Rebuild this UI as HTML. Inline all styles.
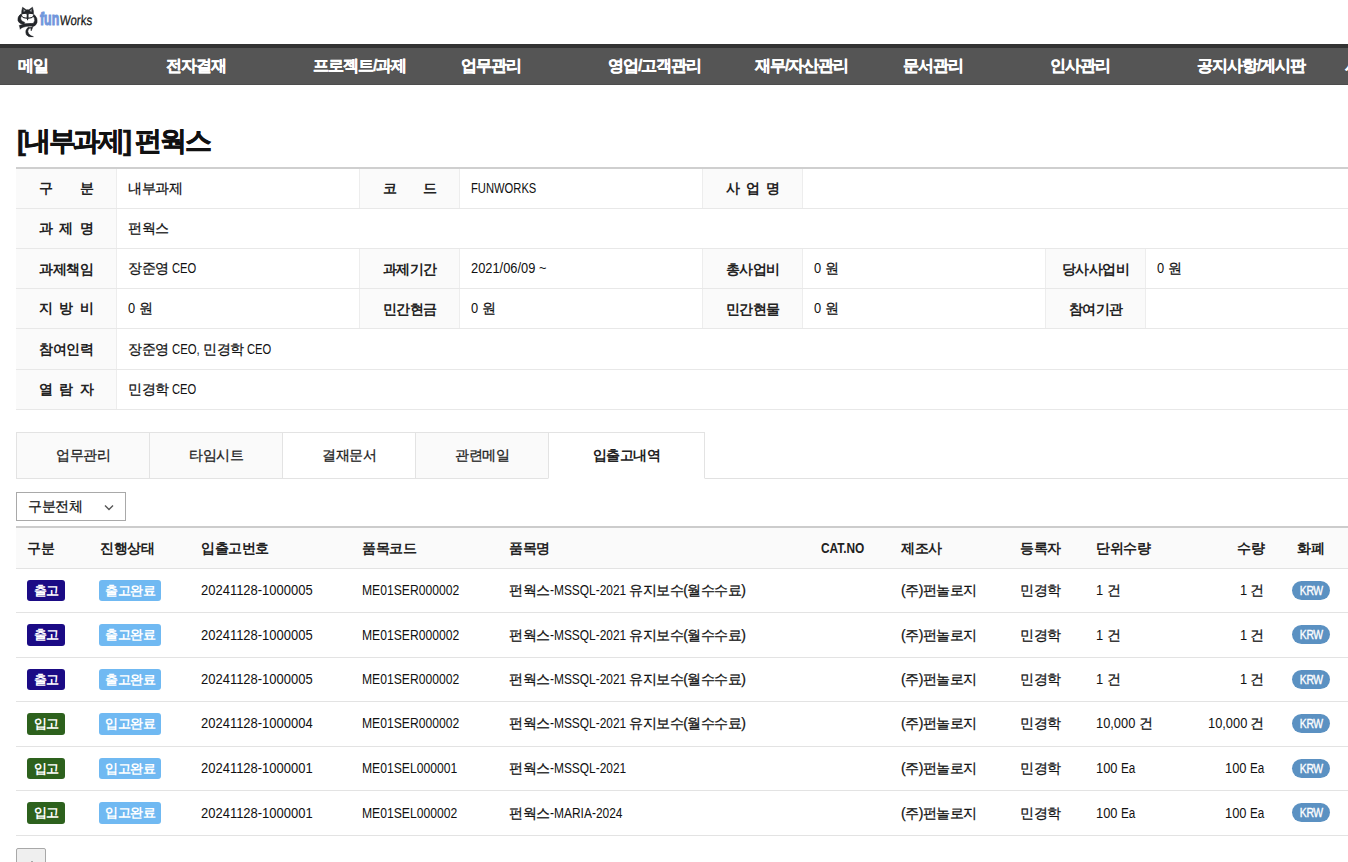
<!DOCTYPE html>
<html lang="ko">
<head>
<meta charset="utf-8">
<style>
*{box-sizing:border-box;margin:0;padding:0}
html,body{width:1348px;height:862px;overflow:hidden;background:#fff}
body{font-family:"Liberation Sans",sans-serif;color:#222;font-size:14px;position:relative;letter-spacing:-0.5px}
.a{position:absolute;white-space:nowrap}
.sx{display:inline-block;white-space:nowrap;letter-spacing:0;-webkit-text-stroke:0}.sx>span{display:inline-block;transform-origin:0 50%}
.tx{-webkit-text-stroke:0.25px #111;color:#111}
#nav{left:0;top:44px;width:1348px;height:41px;background:#555;border-top:4px solid #333;border-bottom:1px solid #4c4c4c}
#nav span{position:absolute;top:8px;color:#fff;font-weight:bold;font-size:16px;white-space:nowrap;letter-spacing:-1px;-webkit-text-stroke:0.3px #fff}
#title{left:17px;top:123px;font-size:27px;font-weight:bold;letter-spacing:-2.2px;-webkit-text-stroke:0.5px #111;color:#111}
.hl{position:absolute;height:1px;background:#e8e8e8}
.vl{position:absolute;width:1px;background:#ededed}
.lab{position:absolute;background:#fafafa;font-weight:bold}
.lab .in{position:absolute;display:flex;justify-content:space-between;white-space:nowrap}
.val{position:absolute;white-space:nowrap}
.tab{position:absolute;top:432px;height:47px;border:1px solid #e3e3e3;background:#fafafa;text-align:center;line-height:44px;font-size:14px;-webkit-text-stroke:0.3px #222}
.tab.on{background:#fff;border-bottom-color:#fff;font-weight:bold;-webkit-text-stroke:0}
.th{position:absolute;top:540px;font-weight:bold}
.b{position:absolute;color:#fff;font-weight:bold;font-size:13px;border-radius:3px;height:21px;line-height:21px;text-align:center}
.out{background:#1b0b85}
.inb{background:#2d611d}
.st{background:#70b9f2}
.krw{position:absolute;color:#fff;font-size:13px;background:#5b91c2;border-radius:10px;height:19px;line-height:19px;width:38px;text-align:center;-webkit-text-stroke:0.35px #fff}.krw span{display:inline-block;transform:scaleX(0.8)}
</style>
</head>
<body>
<svg class="a" style="left:14px;top:4px" width="30" height="36" viewBox="0 0 718 862">
<g fill="#222529" stroke="#222529" stroke-width="12" stroke-linejoin="round">
<path d="M182,255 Q178,170 205,78 L295,140 Q325,130 355,140 L442,75 Q475,170 468,255 Q400,225 325,232 Q250,225 182,255 Z"/>
<path d="M165,240 Q75,300 95,400 Q120,480 240,485 L258,440 Q175,420 160,360 Q150,300 210,262 Z"/>
<path d="M480,250 Q575,330 552,440 Q530,520 440,545 L418,495 Q485,460 495,395 Q500,320 440,280 Z"/>
<path d="M125,515 Q250,455 455,465 L448,528 Q310,515 170,570 Z"/>
<path d="M135,530 L148,605 L200,552 Z"/>
<path d="M350,552 Q250,625 295,735 Q345,805 465,782 Q345,748 332,660 Q328,600 400,570 Z"/>
<path d="M398,548 L410,645 L450,555 Z"/>
</g>
<g fill="#222529">
<path d="M180,278 Q250,340 318,318 L328,352 Q235,362 175,300 Z"/>
<path d="M470,278 Q400,340 332,318 L322,352 Q415,362 475,300 Z"/>
<path d="M292,225 L358,225 L336,390 L314,390 Z"/>
</g>
<g fill="#fff">
<path d="M182,258 Q240,222 308,252 Q304,308 258,314 Q208,308 182,258 Z"/>
<path d="M468,258 Q410,222 342,252 Q346,308 392,314 Q442,308 468,258 Z"/>
</g>
<path fill="#222529" d="M306,232 L344,232 L330,320 L320,320 Z"/>
<path fill="#a0a3a8" d="M225,118 L232,190 L278,160 Z M425,114 L418,190 L372,160 Z"/>
<path fill="#c8cacd" d="M235,265 Q252,256 270,268 Q252,288 235,265 Z M380,268 Q398,256 415,265 Q398,288 380,268 Z"/>
</svg>

<svg class="a" style="left:38px;top:6px" width="58" height="24" viewBox="0 0 58 24">
<text x="2" y="19" font-family="Liberation Sans" font-weight="bold" font-size="19" fill="#7196dc" stroke="#7196dc" stroke-width="1.1" textLength="19.2" lengthAdjust="spacingAndGlyphs" letter-spacing="0">fun</text>
<text x="21.6" y="19" font-family="Liberation Sans" font-size="14" fill="#1c1c1c" stroke="#1c1c1c" stroke-width="0.25" textLength="32.3" lengthAdjust="spacingAndGlyphs" letter-spacing="0" transform="skewX(-4)" style="transform-origin:22px 19px">Works</text>
</svg>

<div id="nav" class="a"><span style="left:18px">메일</span><span style="left:166px">전자결재</span><span style="left:313px">프로젝트/과제</span><span style="left:461px">업무관리</span><span style="left:608px">영업/고객관리</span><span style="left:755px">재무/자산관리</span><span style="left:903px">문서관리</span><span style="left:1050px">인사관리</span><span style="left:1197px">공지사항/게시판</span><span style="left:1345px">시스템</span></div>
<div id="title" class="a">[내부과제] 펀웍스</div>
<div class="a" style="left:16px;top:167px;width:1332px;height:2px;background:#cfcfcf"></div>
<div class="lab" style="left:16px;top:169px;width:100px;height:39px"><div class="in" style="left:23.0px;width:54px;top:11px"><span>구</span><span>분</span></div></div>
<div class="vl" style="left:116px;top:169px;height:39px"></div>
<div class="val tx" style="left:128px;top:169px;line-height:39px">내부과제</div>
<div class="lab" style="left:360px;top:169px;width:99px;height:39px"><div class="in" style="left:22.5px;width:54px;top:11px"><span>코</span><span>드</span></div></div>
<div class="vl" style="left:359px;top:169px;height:39px"></div>
<div class="vl" style="left:459px;top:169px;height:39px"></div>
<div class="val tx" style="left:471px;top:169px;line-height:39px"><span class="sx" style="width:65.33px"><span style="transform:scaleX(0.8000)">FUNWORKS</span></span></div>
<div class="lab" style="left:703px;top:169px;width:99px;height:39px"><div class="in" style="left:22.5px;width:54px;top:11px"><span>사</span><span>업</span><span>명</span></div></div>
<div class="vl" style="left:702px;top:169px;height:39px"></div>
<div class="vl" style="left:802px;top:169px;height:39px"></div>
<div class="hl" style="left:16px;top:208px;width:1332px"></div>
<div class="lab" style="left:16px;top:209px;width:100px;height:39px"><div class="in" style="left:23.0px;width:54px;top:11px"><span>과</span><span>제</span><span>명</span></div></div>
<div class="vl" style="left:116px;top:209px;height:39px"></div>
<div class="val tx" style="left:128px;top:209px;line-height:39px">펀웍스</div>
<div class="hl" style="left:16px;top:248px;width:1332px"></div>
<div class="lab" style="left:16px;top:249px;width:100px;height:39px;text-align:center;line-height:40px">과제책임</div>
<div class="vl" style="left:116px;top:249px;height:39px"></div>
<div class="val tx" style="left:128px;top:249px;line-height:39px">장준영 <span class="sx" style="width:24.27px"><span style="transform:scaleX(0.8000)">CEO</span></span></div>
<div class="lab" style="left:360px;top:249px;width:99px;height:39px;text-align:center;line-height:40px">과제기간</div>
<div class="vl" style="left:359px;top:249px;height:39px"></div>
<div class="vl" style="left:459px;top:249px;height:39px"></div>
<div class="val tx" style="left:471px;top:249px;line-height:39px"><span class="sx" style="width:64.31px"><span style="transform:scaleX(0.9178)">2021/06/09</span></span> <span class="sx" style="width:7.36px"><span style="transform:scaleX(0.9000)">~</span></span></div>
<div class="lab" style="left:703px;top:249px;width:99px;height:39px;text-align:center;line-height:40px">총사업비</div>
<div class="vl" style="left:702px;top:249px;height:39px"></div>
<div class="vl" style="left:802px;top:249px;height:39px"></div>
<div class="val tx" style="left:814px;top:249px;line-height:39px"><span class="sx" style="width:7.16px"><span style="transform:scaleX(0.9200)">0</span></span> 원</div>
<div class="lab" style="left:1046px;top:249px;width:99px;height:39px;text-align:center;line-height:40px">당사사업비</div>
<div class="vl" style="left:1045px;top:249px;height:39px"></div>
<div class="vl" style="left:1145px;top:249px;height:39px"></div>
<div class="val tx" style="left:1157px;top:249px;line-height:39px"><span class="sx" style="width:7.16px"><span style="transform:scaleX(0.9200)">0</span></span> 원</div>
<div class="hl" style="left:16px;top:288px;width:1332px"></div>
<div class="lab" style="left:16px;top:289px;width:100px;height:39px"><div class="in" style="left:23.0px;width:54px;top:11px"><span>지</span><span>방</span><span>비</span></div></div>
<div class="vl" style="left:116px;top:289px;height:39px"></div>
<div class="val tx" style="left:128px;top:289px;line-height:39px"><span class="sx" style="width:7.16px"><span style="transform:scaleX(0.9200)">0</span></span> 원</div>
<div class="lab" style="left:360px;top:289px;width:99px;height:39px;text-align:center;line-height:40px">민간현금</div>
<div class="vl" style="left:359px;top:289px;height:39px"></div>
<div class="vl" style="left:459px;top:289px;height:39px"></div>
<div class="val tx" style="left:471px;top:289px;line-height:39px"><span class="sx" style="width:7.16px"><span style="transform:scaleX(0.9200)">0</span></span> 원</div>
<div class="lab" style="left:703px;top:289px;width:99px;height:39px;text-align:center;line-height:40px">민간현물</div>
<div class="vl" style="left:702px;top:289px;height:39px"></div>
<div class="vl" style="left:802px;top:289px;height:39px"></div>
<div class="val tx" style="left:814px;top:289px;line-height:39px"><span class="sx" style="width:7.16px"><span style="transform:scaleX(0.9200)">0</span></span> 원</div>
<div class="lab" style="left:1046px;top:289px;width:99px;height:39px;text-align:center;line-height:40px">참여기관</div>
<div class="vl" style="left:1045px;top:289px;height:39px"></div>
<div class="vl" style="left:1145px;top:289px;height:39px"></div>
<div class="hl" style="left:16px;top:328px;width:1332px"></div>
<div class="lab" style="left:16px;top:329px;width:100px;height:40px;text-align:center;line-height:41px">참여인력</div>
<div class="vl" style="left:116px;top:329px;height:40px"></div>
<div class="val tx" style="left:128px;top:329px;line-height:40px">장준영 <span class="sx" style="width:27.77px"><span style="transform:scaleX(0.8114)">CEO,</span></span> 민경학 <span class="sx" style="width:24.27px"><span style="transform:scaleX(0.8000)">CEO</span></span></div>
<div class="hl" style="left:16px;top:369px;width:1332px"></div>
<div class="lab" style="left:16px;top:370px;width:100px;height:39px"><div class="in" style="left:23.0px;width:54px;top:11px"><span>열</span><span>람</span><span>자</span></div></div>
<div class="vl" style="left:116px;top:370px;height:39px"></div>
<div class="val tx" style="left:128px;top:370px;line-height:39px">민경학 <span class="sx" style="width:24.27px"><span style="transform:scaleX(0.8000)">CEO</span></span></div>
<div class="hl" style="left:16px;top:409px;width:1332px"></div>
<div class="a" style="left:16px;top:478px;width:1332px;height:1px;background:#e1e1e1"></div>
<div class="tab" style="left:16px;width:134px">업무관리</div>
<div class="tab" style="left:149px;width:134px">타임시트</div>
<div class="tab" style="left:282px;width:134px;background:#fff">결재문서</div>
<div class="tab" style="left:415px;width:134px">관련메일</div>
<div class="tab on" style="left:548px;width:157px">입출고내역</div>
<div class="a tx" style="left:16px;top:492px;width:110px;height:29px;border:1px solid #a9a9a9;line-height:27px;padding-left:11px">구분전체<svg style="position:absolute;left:87px;top:11px" width="10" height="7" viewBox="0 0 10 7"><path d="M1 1.5L5 5.5L9 1.5" fill="none" stroke="#555" stroke-width="1.4"/></svg></div>
<div class="a" style="left:16px;top:526px;width:1332px;height:2px;background:#cccccc"></div>
<div class="a" style="left:16px;top:528px;width:1332px;height:40px;background:#fafafa"></div>
<div class="hl" style="left:16px;top:568px;width:1332px;background:#e3e3e3"></div>
<div class="hl" style="left:16px;top:612px;width:1332px;background:#e3e3e3"></div>
<div class="hl" style="left:16px;top:657px;width:1332px;background:#e3e3e3"></div>
<div class="hl" style="left:16px;top:701px;width:1332px;background:#e3e3e3"></div>
<div class="hl" style="left:16px;top:746px;width:1332px;background:#e3e3e3"></div>
<div class="hl" style="left:16px;top:790px;width:1332px;background:#e3e3e3"></div>
<div class="hl" style="left:16px;top:835px;width:1332px;background:#e3e3e3"></div>
<div class="th a" style="left:27px">구분</div>
<div class="th a" style="left:100px">진행상태</div>
<div class="th a" style="left:201px">입출고번호</div>
<div class="th a" style="left:362px">품목코드</div>
<div class="th a" style="left:509px">품목명</div>
<div class="th a" style="left:821px"><span class="sx" style="width:43.32px"><span style="transform:scaleX(0.8482)">CAT.NO</span></span></div>
<div class="th a" style="left:901px">제조사</div>
<div class="th a" style="left:1020px">등록자</div>
<div class="th a" style="left:1096px">단위수량</div>
<div class="th a" style="left:1297px">화폐</div>
<div class="th a" style="right:84px">수량</div>
<div class="b out" style="left:27px;top:580px;width:38px;height:21px;line-height:21px">출고</div>
<div class="b st" style="left:99px;top:580px;width:62px;height:21px;line-height:21px">출고완료</div>
<div class="a tx" style="left:201px;top:581px;line-height:18px"><span class="sx" style="width:111.64px"><span style="transform:scaleX(0.9272)">20241128-1000005</span></span></div>
<div class="a tx" style="left:362px;top:581px;line-height:18px"><span class="sx" style="width:97.13px"><span style="transform:scaleX(0.8667)">ME01SER000002</span></span></div>
<div class="a tx" style="left:509px;top:581px;line-height:18px">펀웍스<span class="sx" style="width:76.26px"><span style="transform:scaleX(0.8522)">-MSSQL-2021</span></span> 유지보수(월수수료)</div>
<div class="a tx" style="left:901px;top:581px;line-height:18px">(주)펀놀로지</div>
<div class="a tx" style="left:1020px;top:581px;line-height:18px">민경학</div>
<div class="a tx" style="left:1096px;top:581px;line-height:18px"><span class="sx" style="width:7.16px"><span style="transform:scaleX(0.9200)">1</span></span> 건</div>
<div class="a tx" style="right:84px;top:581px;line-height:18px"><span class="sx" style="width:7.16px"><span style="transform:scaleX(0.9200)">1</span></span> 건</div>
<div class="krw" style="left:1292px;top:581px"><span>KRW</span></div>
<div class="b out" style="left:27px;top:624px;width:38px;height:22px;line-height:22px">출고</div>
<div class="b st" style="left:99px;top:624px;width:62px;height:22px;line-height:22px">출고완료</div>
<div class="a tx" style="left:201px;top:626px;line-height:18px"><span class="sx" style="width:111.64px"><span style="transform:scaleX(0.9272)">20241128-1000005</span></span></div>
<div class="a tx" style="left:362px;top:626px;line-height:18px"><span class="sx" style="width:97.13px"><span style="transform:scaleX(0.8667)">ME01SER000002</span></span></div>
<div class="a tx" style="left:509px;top:626px;line-height:18px">펀웍스<span class="sx" style="width:76.26px"><span style="transform:scaleX(0.8522)">-MSSQL-2021</span></span> 유지보수(월수수료)</div>
<div class="a tx" style="left:901px;top:626px;line-height:18px">(주)펀놀로지</div>
<div class="a tx" style="left:1020px;top:626px;line-height:18px">민경학</div>
<div class="a tx" style="left:1096px;top:626px;line-height:18px"><span class="sx" style="width:7.16px"><span style="transform:scaleX(0.9200)">1</span></span> 건</div>
<div class="a tx" style="right:84px;top:626px;line-height:18px"><span class="sx" style="width:7.16px"><span style="transform:scaleX(0.9200)">1</span></span> 건</div>
<div class="krw" style="left:1292px;top:625px"><span>KRW</span></div>
<div class="b out" style="left:27px;top:669px;width:38px;height:21px;line-height:21px">출고</div>
<div class="b st" style="left:99px;top:669px;width:62px;height:21px;line-height:21px">출고완료</div>
<div class="a tx" style="left:201px;top:670px;line-height:18px"><span class="sx" style="width:111.64px"><span style="transform:scaleX(0.9272)">20241128-1000005</span></span></div>
<div class="a tx" style="left:362px;top:670px;line-height:18px"><span class="sx" style="width:97.13px"><span style="transform:scaleX(0.8667)">ME01SER000002</span></span></div>
<div class="a tx" style="left:509px;top:670px;line-height:18px">펀웍스<span class="sx" style="width:76.26px"><span style="transform:scaleX(0.8522)">-MSSQL-2021</span></span> 유지보수(월수수료)</div>
<div class="a tx" style="left:901px;top:670px;line-height:18px">(주)펀놀로지</div>
<div class="a tx" style="left:1020px;top:670px;line-height:18px">민경학</div>
<div class="a tx" style="left:1096px;top:670px;line-height:18px"><span class="sx" style="width:7.16px"><span style="transform:scaleX(0.9200)">1</span></span> 건</div>
<div class="a tx" style="right:84px;top:670px;line-height:18px"><span class="sx" style="width:7.16px"><span style="transform:scaleX(0.9200)">1</span></span> 건</div>
<div class="krw" style="left:1292px;top:670px"><span>KRW</span></div>
<div class="b inb" style="left:27px;top:713px;width:38px;height:22px;line-height:22px">입고</div>
<div class="b st" style="left:99px;top:713px;width:62px;height:22px;line-height:22px">입고완료</div>
<div class="a tx" style="left:201px;top:714px;line-height:18px"><span class="sx" style="width:111.64px"><span style="transform:scaleX(0.9272)">20241128-1000004</span></span></div>
<div class="a tx" style="left:362px;top:714px;line-height:18px"><span class="sx" style="width:97.13px"><span style="transform:scaleX(0.8667)">ME01SER000002</span></span></div>
<div class="a tx" style="left:509px;top:714px;line-height:18px">펀웍스<span class="sx" style="width:76.26px"><span style="transform:scaleX(0.8522)">-MSSQL-2021</span></span> 유지보수(월수수료)</div>
<div class="a tx" style="left:901px;top:714px;line-height:18px">(주)펀놀로지</div>
<div class="a tx" style="left:1020px;top:714px;line-height:18px">민경학</div>
<div class="a tx" style="left:1096px;top:714px;line-height:18px"><span class="sx" style="width:39.32px"><span style="transform:scaleX(0.9182)">10,000</span></span> 건</div>
<div class="a tx" style="right:84px;top:714px;line-height:18px"><span class="sx" style="width:39.32px"><span style="transform:scaleX(0.9182)">10,000</span></span> 건</div>
<div class="krw" style="left:1292px;top:714px"><span>KRW</span></div>
<div class="b inb" style="left:27px;top:758px;width:38px;height:21px;line-height:21px">입고</div>
<div class="b st" style="left:99px;top:758px;width:62px;height:21px;line-height:21px">입고완료</div>
<div class="a tx" style="left:201px;top:759px;line-height:18px"><span class="sx" style="width:111.64px"><span style="transform:scaleX(0.9272)">20241128-1000001</span></span></div>
<div class="a tx" style="left:362px;top:759px;line-height:18px"><span class="sx" style="width:95.28px"><span style="transform:scaleX(0.8681)">ME01SEL000001</span></span></div>
<div class="a tx" style="left:509px;top:759px;line-height:18px">펀웍스<span class="sx" style="width:76.26px"><span style="transform:scaleX(0.8522)">-MSSQL-2021</span></span></div>
<div class="a tx" style="left:901px;top:759px;line-height:18px">(주)펀놀로지</div>
<div class="a tx" style="left:1020px;top:759px;line-height:18px">민경학</div>
<div class="a tx" style="left:1096px;top:759px;line-height:18px"><span class="sx" style="width:21.49px"><span style="transform:scaleX(0.9200)">100</span></span> <span class="sx" style="width:14.32px"><span style="transform:scaleX(0.8364)">Ea</span></span></div>
<div class="a tx" style="right:84px;top:759px;line-height:18px"><span class="sx" style="width:21.49px"><span style="transform:scaleX(0.9200)">100</span></span> <span class="sx" style="width:14.32px"><span style="transform:scaleX(0.8364)">Ea</span></span></div>
<div class="krw" style="left:1292px;top:759px"><span>KRW</span></div>
<div class="b inb" style="left:27px;top:802px;width:38px;height:22px;line-height:22px">입고</div>
<div class="b st" style="left:99px;top:802px;width:62px;height:22px;line-height:22px">입고완료</div>
<div class="a tx" style="left:201px;top:804px;line-height:18px"><span class="sx" style="width:111.64px"><span style="transform:scaleX(0.9272)">20241128-1000001</span></span></div>
<div class="a tx" style="left:362px;top:804px;line-height:18px"><span class="sx" style="width:95.28px"><span style="transform:scaleX(0.8681)">ME01SEL000002</span></span></div>
<div class="a tx" style="left:509px;top:804px;line-height:18px">펀웍스<span class="sx" style="width:72.52px"><span style="transform:scaleX(0.8551)">-MARIA-2024</span></span></div>
<div class="a tx" style="left:901px;top:804px;line-height:18px">(주)펀놀로지</div>
<div class="a tx" style="left:1020px;top:804px;line-height:18px">민경학</div>
<div class="a tx" style="left:1096px;top:804px;line-height:18px"><span class="sx" style="width:21.49px"><span style="transform:scaleX(0.9200)">100</span></span> <span class="sx" style="width:14.32px"><span style="transform:scaleX(0.8364)">Ea</span></span></div>
<div class="a tx" style="right:84px;top:804px;line-height:18px"><span class="sx" style="width:21.49px"><span style="transform:scaleX(0.9200)">100</span></span> <span class="sx" style="width:14.32px"><span style="transform:scaleX(0.8364)">Ea</span></span></div>
<div class="krw" style="left:1292px;top:803px"><span>KRW</span></div>
<div class="a" style="left:16px;top:848px;width:30px;height:24px;border:1px solid #a8a8a8;border-radius:2px;background:#efefef"><svg style="position:absolute;left:11px;top:11px" width="8" height="6" viewBox="0 0 8 6"><path d="M4 1L7 6L1 6Z" fill="#111"/></svg></div>
</body>
</html>
